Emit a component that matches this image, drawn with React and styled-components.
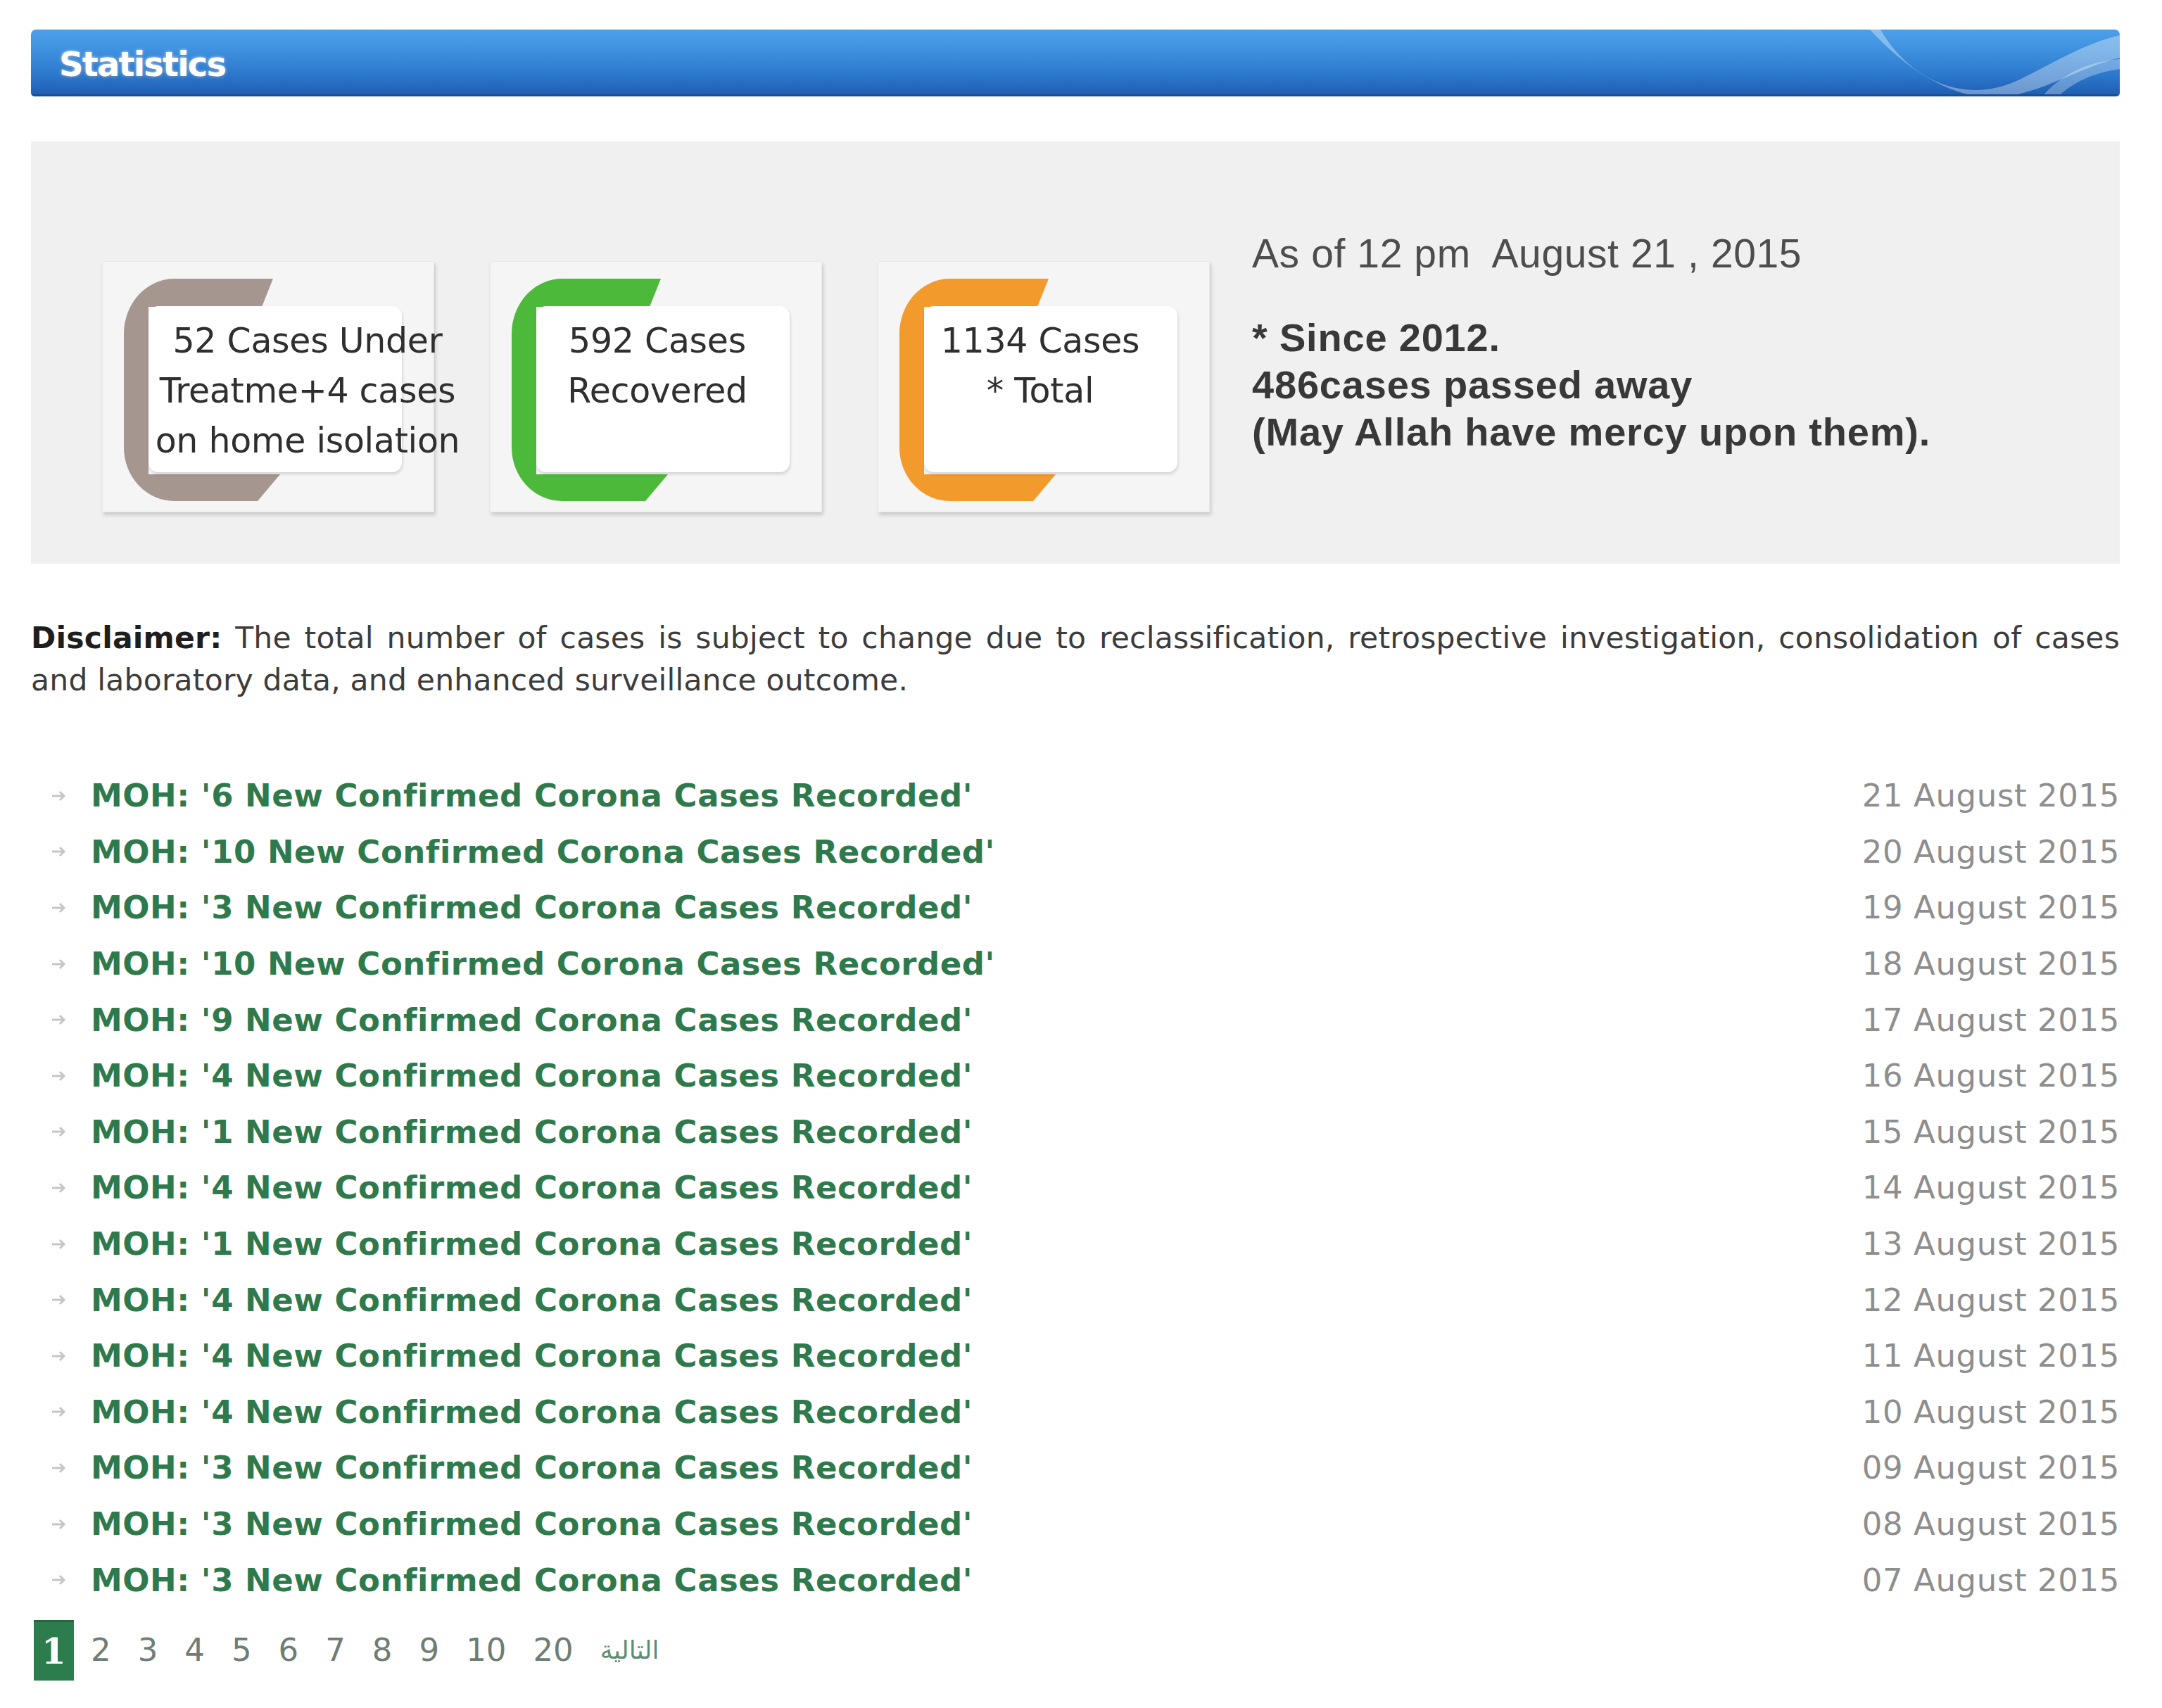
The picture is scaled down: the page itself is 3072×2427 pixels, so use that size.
import React from 'react';
import styled, { createGlobalStyle } from 'styled-components';

const GlobalStyle = createGlobalStyle`
  body {
    margin: 0;
    background: #ffffff;
    font-family: "DejaVu Sans", Verdana, sans-serif;
  }
`;

const Page = styled.div`
  width: 2968px;
  margin-left: 44px;
  padding-top: 42px;
  padding-bottom: 20px;
`;

const Header = styled.div`
  position: relative;
  height: 92px;
  border-radius: 7px 7px 5px 5px;
  overflow: hidden;
  background: linear-gradient(#4d9fe8 0%, #3f92df 30%, #2c78cc 70%, #1d5fb3 100%);
  border-bottom: 3px solid #174e98;
  display: flex;
  align-items: center;
  padding-left: 40px;
`;

const HeaderTitle = styled.h2`
  margin: 0;
  padding-top: 6px;
  font-family: "DejaVu Sans", Verdana, sans-serif;
  font-weight: bold;
  font-size: 48px;
  letter-spacing: -1.8px;
  color: #ffffff;
  text-shadow: 0 0 4px rgba(255, 255, 255, 0.7), 0 1px 2px rgba(0, 40, 100, 0.5);
`;

const Swoosh = styled.svg`
  position: absolute;
  right: 0;
  top: 0;
  width: 360px;
  height: 95px;
`;

const StatsPanel = styled.div`
  margin-top: 64px;
  height: 600px;
  box-sizing: border-box;
  background: #f0f0f0;
  display: flex;
  align-items: flex-start;
  padding: 125px 0 0 101px;
`;

const CardRow = styled.div`
  display: flex;
  gap: 79px;
  margin-top: 45px;
`;

const Card = styled.div`
  position: relative;
  width: 472px;
  height: 357px;
  box-sizing: border-box;
  background: #f5f5f5;
  border: 1px solid #e9e9e9;
  box-shadow: 2px 4px 5px rgba(0, 0, 0, 0.16);
  padding: 63px 0 0 65px;
`;

const Bracket = styled.svg`
  position: absolute;
  left: 30px;
  top: 24px;
  width: 222px;
  height: 316px;
`;

const WhiteBox = styled.div`
  position: relative;
  width: 360px;
  height: 236px;
  box-sizing: border-box;
  background: #ffffff;
  border-radius: 14px;
  box-shadow: 1px 3px 4px rgba(0, 0, 0, 0.14);
  padding-top: 14px;
`;

const CardText = styled.div`
  width: ${(p) => p.$width}px;
  margin-left: ${(p) => p.$shift}px;
  text-align: center;
  font-family: "DejaVu Sans", Verdana, sans-serif;
  font-size: 49px;
  line-height: 71px;
  letter-spacing: -0.3px;
  color: #2f2f2f;
  white-space: nowrap;
`;

const Summary = styled.div`
  margin-left: 60px;
  font-family: "Liberation Sans", Arial, sans-serif;
  color: #3a3a3a;
`;

const AsOf = styled.p`
  margin: 0 0 52px;
  font-size: 57px;
  line-height: 68px;
  letter-spacing: 0.6px;
  color: #4d4d4d;
`;

const Deaths = styled.p`
  margin: 0;
  font-size: 56px;
  line-height: 67px;
  font-weight: bold;
  letter-spacing: 0.8px;
  color: #383838;
`;

const Disclaimer = styled.p`
  margin: 76px 0 0;
  font-family: "DejaVu Sans", Verdana, sans-serif;
  font-size: 42.5px;
  line-height: 60px;
  letter-spacing: 0.2px;
  text-align: justify;
  color: #3c3c3c;

  b {
    color: #1e1e1e;
  }
`;

const NewsList = styled.ul`
  list-style: none;
  margin: 94px 0 0;
  padding: 0;
`;

const NewsRow = styled.li`
  display: flex;
  align-items: center;
  height: 79.6px;
  padding-left: 28px;
`;

const Arrow = styled.svg`
  width: 24px;
  height: 20px;
  margin-right: 33px;
  flex-shrink: 0;
`;

const NewsTitle = styled.a`
  flex: 1;
  font-family: "DejaVu Sans", Verdana, sans-serif;
  font-weight: bold;
  font-size: 45px;
  letter-spacing: 0.5px;
  color: #2f7a4c;
  text-decoration: none;
`;

const NewsDate = styled.span`
  font-family: "DejaVu Sans", Verdana, sans-serif;
  font-size: 45px;
  letter-spacing: 0.6px;
  color: #8e8e8e;
`;

const Pager = styled.div`
  display: flex;
  align-items: center;
  margin-top: 17px;
  padding-left: 4px;
  height: 86px;
`;

const ActivePage = styled.span`
  width: 57px;
  height: 86px;
  display: flex;
  align-items: center;
  justify-content: center;
  margin-right: 5px;
  background: #2d7c4d;
  border-top: 3px solid #23673e;
  box-sizing: border-box;
  font-family: "DejaVu Serif", serif;
  font-weight: bold;
  font-size: 50px;
  color: #ffffff;
`;

const PageLink = styled.a`
  padding: 0 19px;
  font-family: "DejaVu Sans", Verdana, sans-serif;
  font-size: ${(p) => (p.$next ? 36 : 45)}px;
  color: ${(p) => (p.$next ? '#5f8d75' : '#6e7d76')};
  text-decoration: none;
`;

const cards = [
  { color: '#a59690', lines: ['52 Cases Under', 'Treatme+4 cases', 'on home isolation'], width: 460, shift: -4 },
  { color: '#4cb93a', lines: ['592 Cases', 'Recovered'], width: 360, shift: -8 },
  { color: '#f39a2d', lines: ['1134 Cases', '* Total'], width: 360, shift: -15 },
];

const news = [
  [6, 21], [10, 20], [3, 19], [10, 18], [9, 17], [4, 16], [1, 15], [4, 14],
  [1, 13], [4, 12], [4, 11], [4, 10], [3, 9], [3, 8], [3, 7],
];

const pages = ['2', '3', '4', '5', '6', '7', '8', '9', '10', '20'];

const StatCard = ({ color, lines, width, shift }) => (
  <Card>
    <Bracket viewBox="0 0 222 316">
      <path
        d="M212 0 L72 0 A72 78 0 0 0 0 78 L0 240 A72 76 0 0 0 72 316 L190 316 L222 278 L35 278 L35 40 L196 40 Z"
        fill={color}
      />
    </Bracket>
    <WhiteBox>
      <CardText $width={width} $shift={shift}>
        {lines.map((l) => (
          <div key={l}>{l}</div>
        ))}
      </CardText>
    </WhiteBox>
  </Card>
);

const App = () => (
  <>
    <GlobalStyle />
    <Page>
      <Header>
        <HeaderTitle>Statistics</HeaderTitle>
        <Swoosh viewBox="0 0 360 95" preserveAspectRatio="none">
          <path
            d="M20 0 C60 70 140 110 220 70 C270 45 310 20 360 8 L360 40 C300 55 260 85 200 95 C130 105 60 60 5 0 Z"
            fill="rgba(255,255,255,0.35)"
          />
          <path d="M250 95 C280 60 320 45 360 42 L360 56 C320 62 295 75 272 95 Z" fill="rgba(255,255,255,0.3)" />
        </Swoosh>
      </Header>

      <StatsPanel>
        <CardRow>
          {cards.map((c) => (
            <StatCard key={c.color} {...c} />
          ))}
        </CardRow>
        <Summary>
          <AsOf>As of 12 pm&nbsp; August 21 , 2015</AsOf>
          <Deaths>* Since 2012.</Deaths>
          <Deaths>486cases passed away</Deaths>
          <Deaths>(May Allah have mercy upon them).</Deaths>
        </Summary>
      </StatsPanel>

      <Disclaimer>
        <b>Disclaimer:</b> The total number of cases is subject to change due to reclassification,
        retrospective investigation, consolidation of cases and laboratory data, and enhanced
        surveillance outcome.
      </Disclaimer>

      <NewsList>
        {news.map(([n, d]) => (
          <NewsRow key={d}>
            <Arrow viewBox="0 0 24 20">
              <path d="M2 10 H19 M13 4 L19 10 L13 16" stroke="#c6c6c6" strokeWidth="3" fill="none" />
            </Arrow>
            <NewsTitle href="#">MOH: '{n} New Confirmed Corona Cases Recorded'</NewsTitle>
            <NewsDate>{String(d).padStart(2, '0')} August 2015</NewsDate>
          </NewsRow>
        ))}
      </NewsList>

      <Pager>
        <ActivePage>1</ActivePage>
        {pages.map((p) => (
          <PageLink key={p} href="#">
            {p}
          </PageLink>
        ))}
        <PageLink href="#" $next>
          التالية
        </PageLink>
      </Pager>
    </Page>
  </>
);

export default App;
